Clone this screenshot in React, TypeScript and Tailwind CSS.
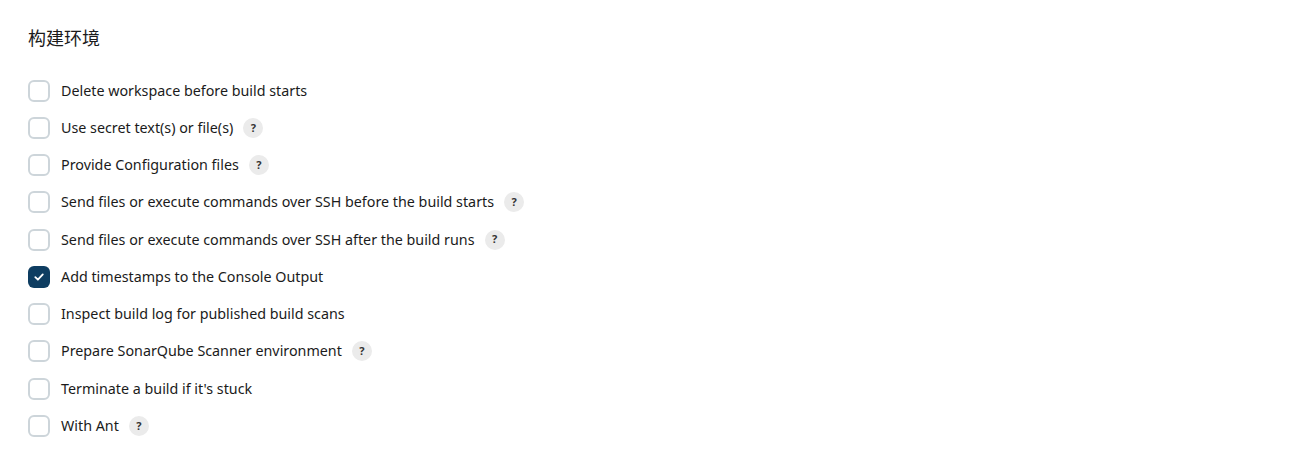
import React from 'react';

// Jenkins "构建环境" section: a plain list of option checkboxes, some with a help badge.
interface Option {
  label: string;
  help?: boolean;
  checked?: boolean;
}

const OPTIONS: Option[] = [
  { label: 'Delete workspace before build starts' },
  { label: 'Use secret text(s) or file(s)', help: true },
  { label: 'Provide Configuration files', help: true },
  { label: 'Send files or execute commands over SSH before the build starts', help: true },
  { label: 'Send files or execute commands over SSH after the build runs', help: true },
  { label: 'Add timestamps to the Console Output', checked: true },
  { label: 'Inspect build log for published build scans' },
  { label: 'Prepare SonarQube Scanner environment', help: true },
  { label: "Terminate a build if it's stuck" },
  { label: 'With Ant', help: true },
];

const Check: React.FC<{ checked?: boolean }> = ({ checked }) =>
  checked ? (
    <span className="w-[22px] h-[22px] rounded-[6px] bg-[#0e3d61] flex items-center justify-center shrink-0">
      <svg width="12" height="12" viewBox="0 0 12 12" fill="none">
        <path d="M2.3 6.2 L4.9 8.7 L9.8 3.4" stroke="white" strokeWidth="1.8" strokeLinecap="round" strokeLinejoin="round" />
      </svg>
    </span>
  ) : (
    <span className="w-[22px] h-[22px] rounded-[6px] border-2 border-[#cdd5da] bg-white shrink-0" />
  );

export default function App() {
  return (
    <div className="min-h-[456px] bg-white px-7 pt-[26px] text-[#1b1b1b]" style={{ fontFamily: '"Noto Sans", "Noto Sans CJK SC", sans-serif' }}>
      <h2 className="text-[18px] leading-6 font-normal mb-[22px]">构建环境</h2>
      <div className="flex flex-col">
        {OPTIONS.map((o) => (
          <label key={o.label} className="flex items-center h-[37.25px]">
            <Check checked={o.checked} />
            <span className="ml-[11px] text-[14.3px] leading-5">{o.label}</span>
            {o.help && (
              <span className="ml-2.5 w-5 h-5 rounded-full bg-[#ebebeb] flex items-center justify-center text-[11px] font-bold text-[#333]">
                ?
              </span>
            )}
          </label>
        ))}
      </div>
    </div>
  );
}
